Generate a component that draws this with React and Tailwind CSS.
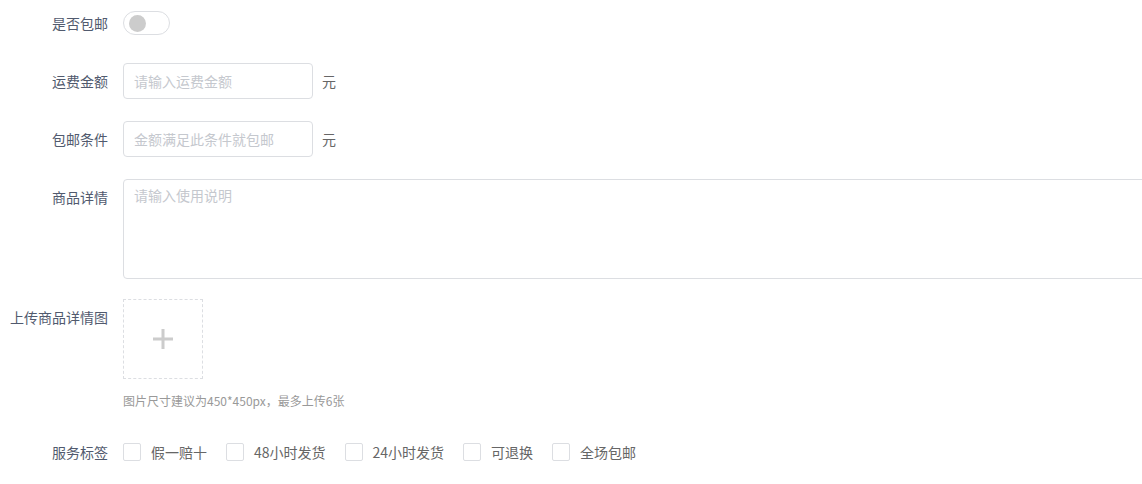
import { useState } from 'react';

const font = { fontFamily: '"Noto Sans CJK SC", "Noto Sans", sans-serif' };

function Label({ children }) {
    return <div className="w-[123px] shrink-0 pr-[15px] text-right text-[14px] leading-[36px] text-[#515a6e]">{children}</div>;
}

function Checkbox({ label }) {
    return (
        <label className="mr-[19px] flex items-center">
            <span className="h-[18px] w-[18px] rounded-[2px] border border-[#dcdee2] bg-white" />
            <span className="ml-[10px] text-[14px] text-[#666]">{label}</span>
        </label>
    );
}

export default function App() {
    const [on] = useState(false);
    const tags = ['假一赔十', '48小时发货', '24小时发货', '可退换', '全场包邮'];

    return (
        <div className="w-full overflow-hidden bg-white pt-[5px] pb-[14px]" style={font}>
            {/* 是否包邮 */}
            <div className="flex">
                <Label>是否包邮</Label>
                <div className="flex h-[36px] items-center">
                    <span className={`relative inline-block h-[24px] w-[47px] rounded-full border ${on ? 'border-[#2d8cf0] bg-[#2d8cf0]' : 'border-[#dcdee2] bg-white'}`}>
                        <span className="absolute top-[3px] left-[5px] h-[17px] w-[17px] rounded-full bg-[#ccc]" />
                    </span>
                </div>
            </div>

            {/* 运费金额 */}
            <div className="mt-[22px] flex">
                <Label>运费金额</Label>
                <div className="flex items-center">
                    <input
                        className="h-[36px] w-[190px] rounded-[4px] border border-[#dcdee2] px-[10px] text-[14px] text-[#515a6e] outline-none placeholder:text-[#c5c8ce]"
                        placeholder="请输入运费金额"
                    />
                    <span className="ml-[9px] text-[14px] text-[#666]">元</span>
                </div>
            </div>

            {/* 包邮条件 */}
            <div className="mt-[22px] flex">
                <Label>包邮条件</Label>
                <div className="flex items-center">
                    <input
                        className="h-[36px] w-[190px] rounded-[4px] border border-[#dcdee2] px-[10px] text-[14px] text-[#515a6e] outline-none placeholder:text-[#c5c8ce]"
                        placeholder="金额满足此条件就包邮"
                    />
                    <span className="ml-[9px] text-[14px] text-[#666]">元</span>
                </div>
            </div>

            {/* 商品详情 */}
            <div className="mt-[22px] flex">
                <Label>商品详情</Label>
                <textarea
                    className="h-[100px] w-[1100px] shrink-0 resize-none rounded-[4px] border border-[#dcdee2] px-[10px] py-[5px] text-[14px] leading-[20px] text-[#515a6e] outline-none placeholder:text-[#c5c8ce]"
                    placeholder="请输入使用说明"
                />
            </div>

            {/* 上传商品详情图 */}
            <div className="mt-[20px] flex">
                <Label>上传商品详情图</Label>
                <div>
                    <div className="flex h-[80px] w-[80px] items-center justify-center border border-dashed border-[#dcdee2]">
                        <svg width="20" height="20" viewBox="0 0 20 20">
                            <rect x="0" y="8.5" width="20" height="3" fill="#ccc" />
                            <rect x="8.5" y="0" width="3" height="20" fill="#ccc" />
                        </svg>
                    </div>
                    <div className="mt-[12px] text-[12px] leading-[20px] text-[#999]">图片尺寸建议为450*450px，最多上传6张</div>
                </div>
            </div>

            {/* 服务标签 */}
            <div className="mt-[23px] flex">
                <Label>服务标签</Label>
                <div className="flex h-[36px] items-center">
                    {tags.map((t) => (
                        <Checkbox key={t} label={t} />
                    ))}
                </div>
            </div>
        </div>
    );
}
